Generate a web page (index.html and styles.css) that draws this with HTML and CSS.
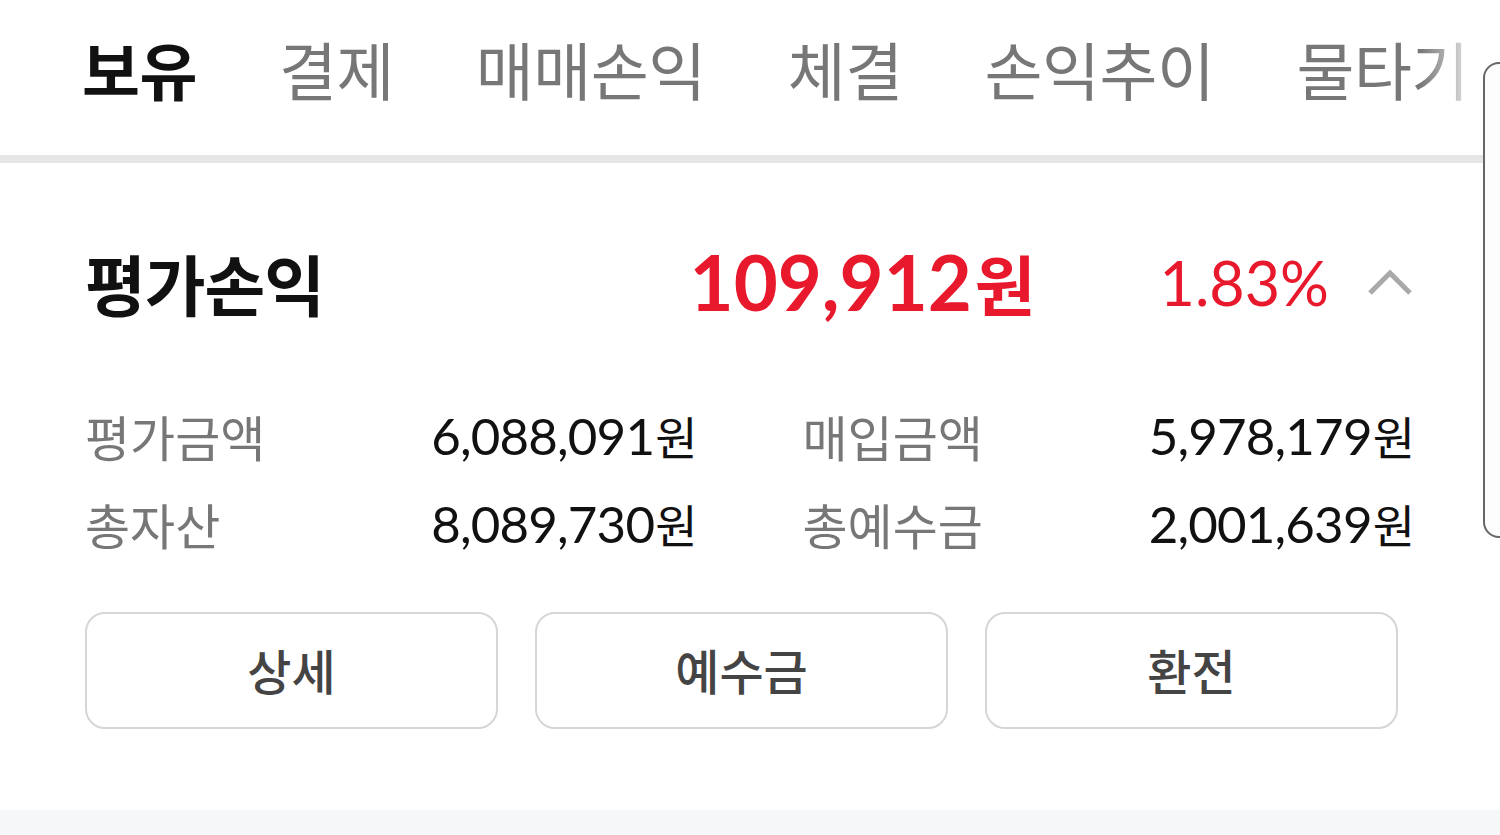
FILE: index.html
```html
<!DOCTYPE html>
<html lang="ko">
<head>
  <meta charset="UTF-8">
  <title>보유</title>
  <link rel="stylesheet" href="styles.css">
</head>
<body>

<div class="tabs">
  <div class="tab active">보유</div>
  <div class="tab">결제</div>
  <div class="tab">매매손익</div>
  <div class="tab">체결</div>
  <div class="tab">손익추이</div>
  <div class="tab">물타기</div>
  <div class="tab-fade"></div>
</div>

<div class="summary">
  <div class="profit-row">
    <h2 class="profit-title">평가손익</h2>
    <div class="profit-amount">109,912<span class="unit">원</span></div>
    <div class="profit-rate">1.83%</div>
    <svg class="toggle" width="46" height="28" viewBox="0 0 46 28">
      <path d="M3 25 L23 5 L43 25" fill="none" stroke="#a9a9a9" stroke-width="5"/>
    </svg>
  </div>

  <div class="details">
    <div class="detail">
      <span class="label">평가금액</span>
      <span class="value">6,088,091<span class="unit">원</span></span>
    </div>
    <div class="detail">
      <span class="label">매입금액</span>
      <span class="value">5,978,179<span class="unit">원</span></span>
    </div>
    <div class="detail">
      <span class="label">총자산</span>
      <span class="value">8,089,730<span class="unit">원</span></span>
    </div>
    <div class="detail">
      <span class="label">총예수금</span>
      <span class="value">2,001,639<span class="unit">원</span></span>
    </div>
  </div>

  <div class="actions">
    <button class="btn">상세</button>
    <button class="btn">예수금</button>
    <button class="btn">환전</button>
  </div>
</div>

<div class="footer-band"></div>

<div class="side-panel"></div>

</body>
</html>
```

FILE: styles.css
```css
html, body {
  margin: 0;
  overflow: hidden;
}

body {
  width: 1500px;
  height: 835px;
  position: relative;
  background: #fff;
  font-family: Lato, "Noto Sans CJK KR", sans-serif;
  color: #111;
}

/* tab strip */
.tabs {
  position: relative;
  display: flex;
  gap: 82px;
  height: 155px;
  padding-left: 82px;
  border-bottom: 8px solid #e6e6e6;
  white-space: nowrap;
  overflow: hidden;
}

.tab {
  position: relative;
  font-family: "Noto Sans CJK KR", sans-serif;
  font-size: 63px;
  font-weight: 400;
  line-height: 63px;
  height: 63px;
  margin-top: 36px;
  letter-spacing: -0.5px;
  color: #777;
}

.tab.active {
  color: #111;
  font-weight: 700;
}

.tab.active::after {
  content: "";
  position: absolute;
  left: 1px;
  right: 0;
  top: 119px;
  height: 8px;
  background: #111;
}

.tab-fade {
  position: absolute;
  top: 0;
  left: 1420px;
  width: 80px;
  height: 155px;
  background: linear-gradient(to right, rgba(255,255,255,0), rgba(255,255,255,0.7) 55%, #fff 75%);
}

/* summary */
.summary {
  padding: 0 85px;
}

.profit-row {
  display: flex;
  align-items: center;
  height: 110px;
  margin-top: 64px;
}

.profit-title {
  flex: 1;
  margin: 0;
  font-family: "Noto Sans CJK KR", sans-serif;
  font-size: 66px;
  font-weight: 700;
  letter-spacing: -1px;
}

.profit-amount {
  margin-left: -12px;
  font-size: 76px;
  font-weight: 700;
  color: #e8192c;
}

.profit-amount .unit {
  font-family: "Noto Sans CJK KR", sans-serif;
  font-size: 66px;
  margin-left: 3px;
}

.profit-rate {
  margin-left: 124px;
  font-size: 61px;
  color: #e8192c;
}

.toggle {
  margin-left: 38px;
  margin-right: 2px;
}

.details {
  display: grid;
  grid-template-columns: 1fr 1fr;
  column-gap: 105px;
  row-gap: 28px;
  margin-top: 68px;
}

.detail {
  display: flex;
  justify-content: space-between;
  align-items: center;
  height: 60px;
}

.label {
  font-family: "Noto Sans CJK KR", sans-serif;
  font-size: 49px;
  font-weight: 400;
  color: #777;
}

.value {
  font-size: 51px;
  color: #111;
  letter-spacing: -0.8px;
}

.value .unit {
  font-family: "Noto Sans CJK KR", sans-serif;
  font-size: 46px;
  letter-spacing: 0;
  margin-left: 1px;
}

.actions {
  display: grid;
  grid-template-columns: repeat(3, 413px);
  gap: 37px;
  margin-top: 59px;
}

.btn {
  height: 117px;
  padding-bottom: 4px;
  background: #fff;
  border: 2px solid #d6d6d6;
  border-radius: 20px;
  font-family: "Noto Sans CJK KR", sans-serif;
  font-size: 48px;
  font-weight: 500;
  color: #444;
}

.footer-band {
  position: absolute;
  left: 0;
  right: 0;
  top: 810px;
  height: 25px;
  background: #f6f7f8;
}

/* panel edge peeking in from the right */
.side-panel {
  position: absolute;
  left: 1483px;
  top: 62px;
  width: 60px;
  height: 472px;
  border: 2px solid #676767;
  border-radius: 16px;
  background: #fdfdfd;
}
```
